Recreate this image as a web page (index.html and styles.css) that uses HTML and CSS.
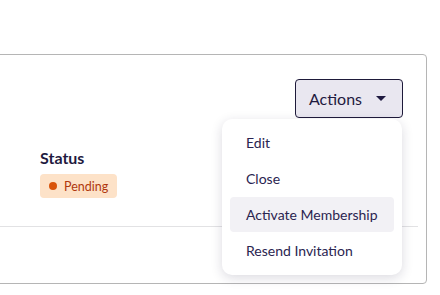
FILE: index.html
```html
<!DOCTYPE html>
<html>
<head>
<meta charset="utf-8">
<link rel="stylesheet" href="styles.css">
</head>
<body>
<div class="page">
  <div class="card">
    <div class="card-top">
      <div class="dropdown">
        <button class="actions-btn">Actions <span class="caret"></span></button>
        <ul class="menu">
          <li class="menu-item">Edit</li>
          <li class="menu-item">Close</li>
          <li class="menu-item active">Activate Membership</li>
          <li class="menu-item">Resend Invitation</li>
        </ul>
      </div>
    </div>
    <div class="status">
      <div class="status-label">Status</div>
      <span class="badge"><span class="dot"></span>Pending</span>
    </div>
  </div>
</div>
</body>
</html>
```
FILE: styles.css
```css
html, body {
  margin: 0;
  padding: 0;
  background: #ffffff;
  font-family: Lato, "Noto Sans", sans-serif;
  color: #231c45;
}
.page {
  padding-top: 54px;
  overflow: hidden;
  height: 241px;
}
.card {
  margin-left: -10px;
  width: 437px;
  height: 230px;
  box-sizing: border-box;
  border: 1px solid #b5b5b5;
  border-radius: 4px;
}
.card-top {
  display: flex;
  justify-content: flex-end;
  padding: 24px 23px 0 0;
}
.dropdown {
  position: relative;
}
.actions-btn {
  display: flex;
  align-items: center;
  gap: 14px;
  height: 39px;
  width: 108px;
  box-sizing: border-box;
  padding: 0 0 0 13px;
  background: #e9e7f0;
  border: 1px solid #1e1a3a;
  border-radius: 4px;
  font-family: inherit;
  font-size: 16px;
  color: #1f1a40;
}
.caret {
  width: 0;
  height: 0;
  border-left: 5px solid transparent;
  border-right: 5px solid transparent;
  border-top: 5px solid #1f1a40;
}
.menu {
  position: absolute;
  top: 40px;
  right: 1px;
  width: 180px;
  box-sizing: border-box;
  margin: 0;
  padding: 6px 8px 7px;
  list-style: none;
  background: #ffffff;
  border-radius: 10px;
  box-shadow: 0 3px 12px rgba(30, 26, 60, 0.16);
}
.menu-item {
  height: 35.75px;
  display: flex;
  align-items: center;
  padding: 0 16px;
  font-size: 14px;
  color: #2a2450;
  border-radius: 4px;
}
.menu-item.active {
  background: #f2f1f5;
}
.status {
  margin-top: 30px;
  margin-right: 8px;
  padding: 0 0 28px 49px;
  border-bottom: 1px solid #e2e2e4;
}
.status-label {
  font-size: 16px;
  font-weight: 700;
  line-height: 20px;
  color: #1f1a40;
}
.badge {
  margin-top: 6px;
  display: inline-flex;
  align-items: center;
  gap: 7px;
  height: 24px;
  padding: 0 9px 0 9px;
  background: #fde2c8;
  border-radius: 4px;
  font-size: 12.5px;
  color: #b0380e;
}
.dot {
  width: 8px;
  height: 8px;
  border-radius: 50%;
  background: #d9540a;
}
```
